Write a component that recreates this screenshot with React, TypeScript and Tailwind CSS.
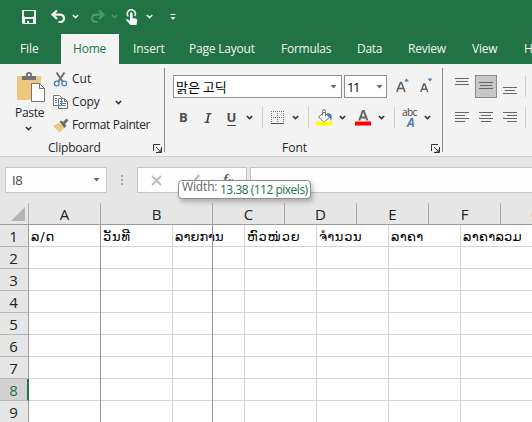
import React from "react";

const Caret = ({ className = "", color = "#333" }: { className?: string; color?: string }) => (
  <svg width="7" height="5" viewBox="0 0 7 5" className={`shrink-0 ${className}`} fill="none" stroke={color} strokeWidth="1.5">
    <path d="M.8 1 3.500 3.600 6.200 1" />
  </svg>
);

const Arrow = ({ className = "" }: { className?: string }) => (
  <svg width="7" height="4" viewBox="0 0 7 4" className={`shrink-0 ${className}`}>
    <path d="M.5 0h6L3.500 3.600z" fill="#6a6a6a" />
  </svg>
);

const Launcher = ({ className = "" }: { className?: string }) => (
  <svg width="9" height="9" viewBox="0 0 9 9" className={`shrink-0 ${className}`} fill="none" stroke="#333">
    <path d="M.5 7V.5H7M3 3l4.500 4.500M8.500 3v5.500H3M8 5v3H5" />
  </svg>
);

const QuickAccess = () => (
  <div className="flex h-[34px] items-start pl-[22px] pt-[9px]">
    <svg width="14" height="15" viewBox="0 0 14 15" className="mt-px shrink-0">
      <path fillRule="evenodd" fill="#f3f3f3" d="M0 0h14v14H1l-1-1zM2 1v5l1 1h8l1-1V1zM3 9v4h2v-2h2v2h4V9z" />
    </svg>
    <svg width="15" height="15" viewBox="0 0 15 15" className="ml-[15px] mt-px shrink-0" fill="none" stroke="#f3f3f3" strokeWidth="2.200">
      <path d="M6 .5 1.500 4.700 6 8.900M2 4.700h6.500C12 4.700 13 6.500 13 8.300S12 12 9 12H7.500" />
    </svg>
    <Caret className="ml-[6px] mt-[5px]" color="#f3f3f3" />
    <svg width="15" height="15" viewBox="0 0 15 15" className="ml-[11px] mt-px shrink-0" fill="none" stroke="#4f9670" strokeWidth="2.200">
      <path d="m9 .5 4.500 4.200L9 8.900M13 4.700H6.500C3 4.700 2 6.500 2 8.300S3 12 6 12h1.500" />
    </svg>
    <Caret className="ml-[6px] mt-[5px]" color="#4f9670" />
    <svg width="12" height="17" viewBox="0 0 12 17" className="ml-[8px] shrink-0">
      <path d="M2.300 7.500A4 4 0 1 1 8.700 7" fill="none" stroke="#f3f3f3" strokeWidth="1.600" />
      <path d="M4 4.500c0-1.800 2.600-1.800 2.600 0V9l3.700.8c1 .3 1.200 1 1 2l-.9 4.200H4.700L.3 11.500c-.6-1 .4-1.800 1.300-1.200L4 11.700z" fill="#f3f3f3" />
    </svg>
    <Caret className="ml-[8px] mt-[5px]" color="#f3f3f3" />
    <svg width="6" height="7" viewBox="0 0 6 7" className="ml-[17px] mt-[5px] shrink-0" fill="#f3f3f3">
      <path d="M.5 0h5v1h-5zM.5 3h5L3 6z" />
    </svg>
  </div>
);

const tabs: [string, string][] = [
  ["File", "w-[61px] pl-[20px] tracking-[-0.1px]"],
  ["Home", "w-[58px] pl-[12px] bg-[#f3f3f3] text-[#217346] tracking-[-0.2px]"],
  ["Insert", "w-[56px] pl-[14px] tracking-[-0.1px]"],
  ["Page Layout", "w-[92px] pl-[14px] tracking-[-0.2px]"],
  ["Formulas", "w-[76px] pl-[14px] tracking-[-0.25px]"],
  ["Data", "w-[51px] pl-[14px] tracking-[-0.3px]"],
  ["Review", "w-[64px] pl-[14px] tracking-[-0.25px]"],
  ["View", "w-[52px] pl-[14px] tracking-[-0.2px]"],
  ["Help", "w-[60px] pl-[14px]"],
];

const Clipboard = () => (
  <section className="flex h-[84px] w-[165px] shrink-0 flex-col border-r border-[#8a8a8a]">
    <div className="flex h-[72px]">
      <div className="flex w-[45px] flex-col pl-[15px] pt-[4px]">
        <svg width="30" height="31" viewBox="0 0 30 31" className="ml-[2px] shrink-0">
          <path d="M0 4h24v24H0z" fill="#ecc77d" />
          <path d="M5 4h4V2.500Q9 0 12 0t3 2.500V4h4v4H5z" fill="#737373" />
          <path d="M11 2h2v2h-2z" fill="#f3f3f3" />
          <path d="M14.500 11.500h8l5 5v13h-13z" fill="#fff" stroke="#737373" />
          <path d="M22.500 11.500v5h5" fill="none" stroke="#737373" />
        </svg>
        <span className="mt-[1px] h-[17px] leading-[17px] tracking-[-0.3px]">Paste</span>
        <Caret className="ml-[10px] mt-[5px]" />
      </div>
      <div className="flex flex-col pl-[8px]">
        <div className="flex h-[22px] items-center">
          <svg width="15" height="15" viewBox="0 0 15 15" className="shrink-0" fill="none">
            <path d="m3.500.5 6.500 9.500M11.500.5 5 10" stroke="#737373" strokeWidth="2" />
            <circle cx="3.700" cy="11.500" r="2.400" stroke="#4a80b9" strokeWidth="1.200" />
            <circle cx="11.200" cy="11.500" r="2.400" stroke="#4a80b9" strokeWidth="1.200" />
          </svg>
          <span className="ml-[4px]">Cut</span>
        </div>
        <div className="flex h-[24px] items-center">
          <svg width="16" height="15" viewBox="0 0 16 15" className="shrink-0" fill="#fff" stroke="#737373">
            <path d="M.5.500h6l2 2v8h-8zM5.500 3.500h6l3 3v7h-9z" />
            <path d="M11.500 3.500v3h3" fill="none" />
            <path d="M2 3.500h2M2 5.500h2M2 7.500h2M7 6.500h3M7 8.500h6M7 10.500h6" stroke="#4a80b9" />
          </svg>
          <span className="ml-[3px] w-[29px] tracking-[-0.1px]">Copy</span>
          <Caret className="ml-[14px]" />
        </div>
        <div className="flex h-[22px] items-center">
          <svg width="16" height="15" viewBox="0 0 16 15" className="shrink-0">
            <path d="m0 8 6.500-3.500 5 5L7.500 14H6z" fill="#ecc77d" />
            <path d="m6.500 3.500 2-1L10 4l3.500-3.500 2 2L12 6l1.500 1.500-2 2.500z" fill="#6b6b6b" />
          </svg>
          <span className="ml-[3px] whitespace-nowrap tracking-[-0.4px]">Format Painter</span>
        </div>
      </div>
    </div>
    <div className="mt-[4px] flex h-[8px] items-center pl-[48px]">
      <span className="w-[51px] tracking-[-0.2px]">Clipboard</span>
      <Launcher className="ml-[54px]" />
    </div>
  </section>
);

const Rule = ({ className = "" }: { className?: string }) => <div className={`h-[21px] w-px shrink-0 bg-[#d0d0d0] ${className}`} />;

const FontGroup = () => (
  <section className="flex h-[84px] w-[278px] shrink-0 flex-col border-r border-[#8a8a8a] pl-[8px] pt-[7px]">
    <div className="flex h-[23px]">
      <div className="flex h-[23px] w-[169px] items-center justify-between border border-[#8f8f8f] bg-white pl-[2px] pr-[4px] text-black">
        <span className="font-['Noto_Sans_CJK_KR',sans-serif] text-[13px] leading-[20px]">맑은 고딕</span>
        <Arrow />
      </div>
      <div className="ml-[2px] flex h-[23px] w-[43px] items-center justify-between border border-[#8f8f8f] bg-white pl-[2px] pr-[3px] text-black">
        <span className="text-[13px] tracking-[-1.500px]">11</span>
        <Arrow />
      </div>
      <svg width="14" height="15" viewBox="0 0 14 15" className="ml-[9px] mt-[3px] shrink-0">
        <path d="m.8 14 3.700-9.500h.9L9 14M2.300 10.500h5.200" fill="none" stroke="#606060" strokeWidth="1.600" />
        <path d="m8 3.500 2.500-3 2.500 3z" fill="#4a80b9" />
      </svg>
      <svg width="14" height="15" viewBox="0 0 14 15" className="ml-[10px] mt-[3px] shrink-0">
        <path d="m.8 14 3-8h.9l3 8M2.100 11.200h4.400" fill="none" stroke="#606060" strokeWidth="1.500" />
        <path d="M7.500.500h5l-2.500 3z" fill="#4a80b9" />
      </svg>
    </div>
    <div className="mt-[9px] flex h-[21px] items-center text-[13px] text-[#4c4c4c]">
      <span className="ml-[6px] w-[9px] font-bold leading-[20px] relative top-[-1px]">B</span>
      <svg width="8" height="10" viewBox="0 0 8 10" className="ml-[16px] shrink-0" fill="none" stroke="#4c4c4c" strokeWidth="1.200">
        <path d="M2.500.600h5M.300 9.400h5" />
        <path d="M5 .500 3 9.500" strokeWidth="1.800" />
      </svg>
      <div className="ml-[15px] mt-[2px] flex h-[14px] w-[9px] justify-center border-b border-[#4c4c4c] font-bold leading-[11px]">U</div>
      <Caret className="ml-[10px]" />
      <Rule className="ml-[9px]" />
      <svg width="14" height="14" viewBox="0 0 14 14" className="ml-[8px] shrink-0" fill="none" stroke="#777">
        <path strokeDasharray="1 1" d="M0 .500h13M0 6.500h13M.500 0v13M6.500 0v13M12.500 0v13" />
        <path d="M0 12.500h13" stroke="#555" />
      </svg>
      <Caret className="ml-[7px]" />
      <Rule className="ml-[9px]" />
      <svg width="17" height="17" viewBox="0 0 17 17" className="ml-[7px] shrink-0">
        <path d="m8 3 5.500 5.500L8 13 2.500 8z" fill="#fff" stroke="#737373" />
        <path d="M6.500 6.500V2.500Q6.500.500 8 .500T9.500 2.500v5" fill="none" stroke="#737373" />
        <path d="M11 4c5 0 5.500 3 4 8-1-2-1-4-4-6z" fill="#4a80b9" />
        <path d="M0 12.500h16v4H0z" fill="#ff0" />
      </svg>
      <Caret className="ml-[6px]" />
      <svg width="17" height="17" viewBox="0 0 17 17" className="ml-[9px] shrink-0">
        <path d="m4.200 11.500 3.600-9.500h1l3.600 9.500M5.700 8.500h5.200" fill="none" stroke="#666" strokeWidth="2" />
        <path d="M0 12.500h16v4H0z" fill="#f00" />
      </svg>
      <Caret className="ml-[6px]" />
      <Rule className="ml-[9px]" />
      <div className="ml-[7px] flex h-[20px] w-[15px] flex-col">
        <span className="text-[10px] leading-[8px] tracking-[-0.600px] text-[#444]">abc</span>
        <span className="pl-[5px] text-[12px] font-bold italic leading-[13px] text-[#4a80b9]">A</span>
      </div>
      <Caret className="ml-[7px]" />
    </div>
    <div className="mt-[16px] flex h-[8px] items-center pl-[109px]">
      <span className="w-[25px]">Font</span>
      <Launcher className="ml-[124px]" />
    </div>
  </section>
);

const Lines = ({ rows, className = "" }: { rows: string; className?: string }) => (
  <svg width="14" height="11" viewBox="0 0 14 11" className={`shrink-0 ${className}`} fill="none" stroke="#666">
    <path d={rows} />
  </svg>
);

const Alignment = () => (
  <section className="flex flex-col pl-[12px] pt-[7px]">
    <div className="flex h-[23px]">
      <Lines className="mt-[3px]" rows="M0 .500h14M1 3.500h12M0 6.500h14" />
      <div className="ml-[6px] flex h-[23px] w-[22px] items-start border border-[#8a8a8a] bg-[#c7c7c7] pl-[3px] pt-[6px]">
        <Lines rows="M0 .500h14M1 3.500h12M0 6.500h14" />
      </div>
      <Lines className="ml-[6px] mt-[12px]" rows="M0 .500h14M2 3.500h10M0 6.500h14" />
      <Rule className="ml-[8px] mt-px" />
    </div>
    <div className="mt-[9px] flex h-[21px]">
      <Lines className="mt-[5px]" rows="M0 .500h14M0 3.500h10M0 6.500h14M0 9.500h10" />
      <Lines className="ml-[10px] mt-[5px]" rows="M0 .500h14M2 3.500h10M0 6.500h14M2 9.500h10" />
      <Lines className="ml-[10px] mt-[5px]" rows="M0 .500h14M4 3.500h10M0 6.500h14M4 9.500h10" />
      <Rule className="ml-[8px]" />
    </div>
  </section>
);

const FormulaBar = () => (
  <div className="flex h-[46px] items-start bg-[#e6e6e6] pl-[5px] pt-[10px]">
    <div className="flex h-[26px] w-[102px] items-center justify-between border border-[#c6c6c6] bg-[#fdfdfd] pl-[6px] pr-[6px]">
      <span className="text-[13px] tracking-[-0.3px] text-[#444]">I8</span>
      <Arrow />
    </div>
    <svg width="2" height="10" viewBox="0 0 2 10" className="ml-[14px] mt-[8px] shrink-0" fill="#a8a8a8">
      <path d="M0 0h2v2H0zM0 4h2v2H0zM0 8h2v2H0z" />
    </svg>
    <div className="ml-[14px] flex h-[26px] w-[110px] items-center border border-[#c6c6c6] bg-[#fdfdfd] pl-[13px]">
      <svg width="11" height="11" viewBox="0 0 11 11" fill="none" stroke="#bdbdbd" strokeWidth="1.800">
        <path d="m1 1 9 9M10 1 1 10" />
      </svg>
      <svg width="12" height="12" viewBox="0 0 12 12" className="ml-[26px]" fill="none" stroke="#bdbdbd" strokeWidth="2.200">
        <path d="m1 6 3 4 7-9" />
      </svg>
      <span className="ml-[23px] font-['Liberation_Serif',serif] text-[15px] font-bold italic leading-[20px] text-[#666]">f<span className="text-[10px]">x</span></span>
    </div>
    <div className="ml-[3px] h-[26px] flex-1 border-y border-l border-[#c6c6c6] bg-[#fdfdfd]" />
  </div>
);

const headings: [string, string][] = [
  ["A", "w-[72px]"],
  ["B", "w-[112px]"],
  ["C", "w-[72px]"],
  ["D", "w-[72px]"],
  ["E", "w-[72px]"],
  ["F", "w-[72px]"],
  ["G", "w-[72px]"],
];

const firstRow: [string, string][] = [
  ["ລ/ດ", "tracking-[0.9px]"],
  ["ວັນທີ", "tracking-[0.9px]"],
  ["ລາຍການ", "tracking-[0px]"],
  ["ຫົວໜ່ວຍ", "tracking-[0.8px]"],
  ["ຈຳນວນ", "tracking-[0.7px]"],
  ["ລາຄາ", "tracking-[0.3px]"],
  ["ລາຄາລວມ", "tracking-[0.25px]"],
];

const Sheet = () => (
  <div className="relative">
    <div className="flex h-[22px] w-[700px] border-b border-[#9b9b9b] bg-[#e6e6e6]">
      <div className="flex h-[21px] w-[29px] shrink-0 items-start border-r border-[#b0b0b0] pl-[11px] pt-[4px]">
        <svg width="14" height="14" viewBox="0 0 14 14"><path d="M14 0v14H0z" fill="#b4b4b4" /></svg>
      </div>
      {headings.map(([name, width]) => (
        <div key={name} className={`flex h-[21px] shrink-0 items-center justify-center border-r border-[#ababab] text-[15px] leading-[20px] text-[#222] ${width}`}>
          {name}
        </div>
      ))}
    </div>
    {Array.from({ length: 9 }, (_, row) => (
      <div key={row} className="flex h-[22px] w-[700px]">
        <div className={`flex h-[22px] w-[29px] shrink-0 items-center justify-center border-b border-b-[#b4b4b4] text-[15px] leading-[20px] ${row === 7 ? "border-r-2 border-r-[#217346] bg-[#d2d2d2] text-[#217346]" : "border-r border-r-[#9b9b9b] bg-[#e6e6e6] pr-px text-[#222]"}`}>
          {row + 1}
        </div>
        {firstRow.map(([label, tracking], column) => (
          <div key={column} className={`h-[22px] w-[72px] shrink-0 whitespace-nowrap border-b border-r border-[#d4d4d4] pl-[2px] font-['DejaVu_Sans',sans-serif] text-[13px] leading-[23px] text-black ${tracking}`}>
            {row === 0 ? label : ""}
          </div>
        ))}
      </div>
    ))}
    <div className="absolute bottom-0 left-[100px] top-[22px] w-px bg-[#969696]" />
    <div className="absolute bottom-0 left-[212px] top-[22px] w-px bg-[#969696]" />
    <div className="absolute left-[178px] top-[-23px] flex h-[19px] w-[133px] whitespace-nowrap rounded-[4px] border border-[#8d8d8d] bg-white pl-[3px] shadow-[2px_3px_5px_rgba(0,0,0,0.25)]">
      <span className="w-[38px] text-[12px] leading-[11px] tracking-[-0.15px] text-[#666]">Width:</span>
      <span className="text-[12px] leading-[18px] tracking-[-0.500px] text-[#217346]">13.38 (112 pixels)</span>
    </div>
  </div>
);

export default function App() {
  return (
    <div className="h-[422px] w-[532px] overflow-hidden bg-white font-['Open_Sans',sans-serif] text-[12px] leading-[16px] text-[#262626]">
      <header className="h-[64px] bg-[#217346] text-[#f3f3f3]">
        <QuickAccess />
        <nav className="flex h-[30px] w-[600px]">
          {tabs.map(([name, style]) => (
            <div key={name} className={`h-[30px] shrink-0 whitespace-nowrap leading-[29px] ${style}`}>{name}</div>
          ))}
        </nav>
      </header>
      <main>
        <div className="flex h-[93px] w-[600px] border-b border-[#d0d0d0] bg-[#f3f3f3] pt-[4px]">
          <Clipboard />
          <FontGroup />
          <Alignment />
        </div>
        <FormulaBar />
        <Sheet />
      </main>
    </div>
  );
}
